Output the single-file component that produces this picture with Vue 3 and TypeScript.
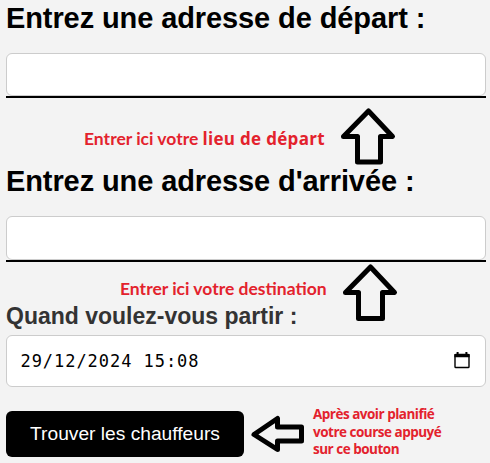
<script setup lang="ts">
import { ref } from 'vue'

const departure = ref<string>('')
const arrival = ref<string>('')
const date = ref<string>('29/12/2024 15:08')
</script>

<template>
  <main class="page">
    <section class="field">
      <h2 class="title">Entrez une adresse de départ :</h2>
      <div class="line"><input v-model="departure" class="box" type="text" aria-label="Départ" /></div>
    </section>
    <section class="field second">
      <h2 class="title arrival">Entrez une adresse d'arrivée :</h2>
      <div class="line tall"><input v-model="arrival" class="box" type="text" aria-label="Arrivée" /></div>
    </section>
    <h3 class="when">Quand voulez-vous partir :</h3>
    <div class="date">
      <span class="date-text">{{ date }}</span>
      <svg class="calendar" width="16" height="17" viewBox="0 0 16 17">
        <path d="M1.8 2.5h12.4q.8 0 .8.8v11.4q0 .8-.8.8H1.8q-.8 0-.8-.8V3.300q0-.8.8-.8z" fill="none" stroke="#000" stroke-width="1.4" />
        <path d="M.4 2h15.200v3.200H.4zM2.600 0h2v2.500h-2zM11.400 0h2v2.500h-2z" />
      </svg>
    </div>
    <button class="submit" type="button">Trouver les chauffeurs</button>

    <p class="note note-departure"><span>Entrer ici votre </span><b>lieu de départ</b></p>
    <p class="note note-arrival">Entrer ici votre destination</p>
    <p class="note note-submit">
      <span class="l1">Après avoir planifié</span>
      <span class="l2">votre course appuyé</span>
      <span class="l3">sur ce bouton</span>
    </p>
    <svg class="arrow up-one" width="58" height="60" viewBox="0 0 58 60">
      <path d="M29.500 4L53.500 29.500H41.500V55H18.500V29.500H4.500Z" />
    </svg>
    <svg class="arrow up-two" width="58" height="60" viewBox="0 0 58 60">
      <path d="M29.500 4L53.500 29.500H41.500V55.500H17.500V29.500H4.500Z" />
    </svg>
    <svg class="arrow left" width="56" height="40" viewBox="0 0 56 40">
      <path d="M5 20.500L28.500 4.500V13H52.500V27H28.500V35.500Z" />
    </svg>
  </main>
</template>

<style>
body { background: #f3f3f3; overflow: hidden; }
</style>

<style scoped>
.page {
  position: relative;
  box-sizing: border-box;
  height: 463px;
  padding: 0 4px 0 6px;
  background: #f3f3f3;
  font-family: "Liberation Sans", Arial, sans-serif;
}
.title {
  box-sizing: border-box;
  margin: 0;
  padding-top: 1px;
  height: 53px;
  font-size: 29px;
  line-height: 35px;
  letter-spacing: -0.1px;
  white-space: nowrap;
  color: #000;
}
.line { box-sizing: border-box; height: 45px; border-bottom: 2px solid #000; }
.line.tall { height: 46px; }
.box {
  display: block;
  box-sizing: border-box;
  width: 100%;
  height: 43px;
  border: 1px solid #ccc;
  border-radius: 6px;
  background: #fff;
  outline: none;
}
.tall .box { height: 44px; }
.second { padding-top: 65px; }
.when {
  margin: 0;
  padding-top: 40px;
  height: 33px;
  font-size: 23px;
  line-height: 28px;
  white-space: nowrap;
  color: #333;
}
.date {
  display: flex;
  align-items: center;
  justify-content: space-between;
  box-sizing: border-box;
  height: 52px;
  padding: 0 15.500px 2px 13.500px;
  border: 1px solid #ccc;
  border-radius: 6px;
  background: #fff;
}
.date-text { padding-top: 2px; font: 17px "DejaVu Sans Mono", monospace; letter-spacing: 0.95px; color: #000; }
.submit {
  display: block;
  width: 238px;
  height: 46px;
  margin-top: 24px;
  padding: 0;
  border: 0;
  border-radius: 6px;
  background: #000;
  color: #fff;
  font: 19.200px "Liberation Sans", Arial, sans-serif;
  white-space: nowrap;
}
.note {
  position: absolute;
  margin: 0;
  color: #e3222d;
  font-family: "Open Sans", "Noto Sans", sans-serif;
  font-weight: 700;
  white-space: nowrap;
}
.note-departure { left: 84px; top: 127px; font-size: 17.500px; line-height: 22px; white-space: pre; }
.note-departure span { font-family: Lato, sans-serif; }
.note-departure b { font-size: 17px; font-weight: 700; letter-spacing: 0.3px; }
.note-arrival { left: 120px; top: 278px; font-family: Lato, sans-serif; font-size: 17.500px; line-height: 22px; }
.note-submit { left: 313px; top: 406px; font-size: 13.500px; line-height: 17.600px; letter-spacing: -0.5px; }
.note-submit span { display: block; }
.arrow { position: absolute; fill: none; stroke: #000; stroke-width: 5; stroke-linejoin: round; }
.up-one { left: 339px; top: 107px; }
.up-two { left: 341px; top: 263px; }
.left { left: 249px; top: 414px; }
</style>
